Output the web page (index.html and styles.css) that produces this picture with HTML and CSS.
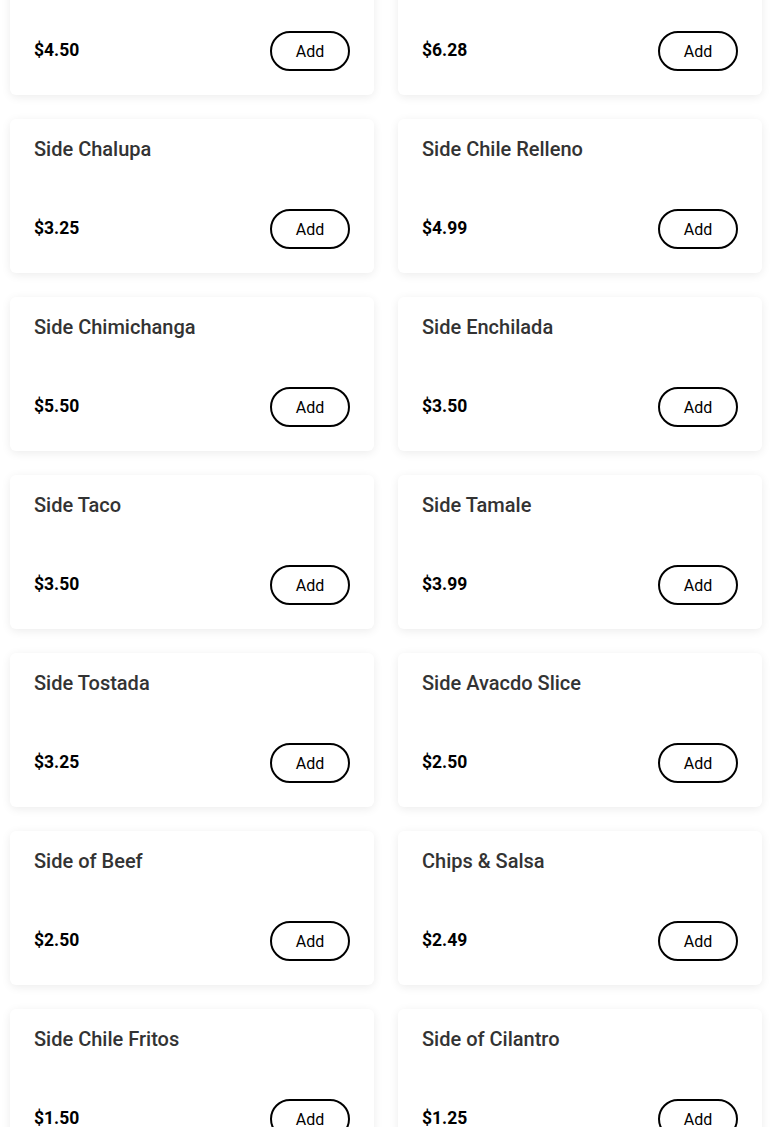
FILE: index.html
```html
<!DOCTYPE html>
<html lang="en">
<head>
<meta charset="utf-8">
<title>Menu</title>
<link rel="stylesheet" href="styles.css">
</head>
<body>
<main class="menu">
  <div class="card"><h3 class="title">Side Burrito</h3><div class="row"><span class="price">$4.50</span><button class="add">Add</button></div></div>
  <div class="card"><h3 class="title">Side Quesadilla</h3><div class="row"><span class="price">$6.28</span><button class="add">Add</button></div></div>
  <div class="card"><h3 class="title">Side Chalupa</h3><div class="row"><span class="price">$3.25</span><button class="add">Add</button></div></div>
  <div class="card"><h3 class="title">Side Chile Relleno</h3><div class="row"><span class="price">$4.99</span><button class="add">Add</button></div></div>
  <div class="card"><h3 class="title">Side Chimichanga</h3><div class="row"><span class="price">$5.50</span><button class="add">Add</button></div></div>
  <div class="card"><h3 class="title">Side Enchilada</h3><div class="row"><span class="price">$3.50</span><button class="add">Add</button></div></div>
  <div class="card"><h3 class="title">Side Taco</h3><div class="row"><span class="price">$3.50</span><button class="add">Add</button></div></div>
  <div class="card"><h3 class="title">Side Tamale</h3><div class="row"><span class="price">$3.99</span><button class="add">Add</button></div></div>
  <div class="card"><h3 class="title">Side Tostada</h3><div class="row"><span class="price">$3.25</span><button class="add">Add</button></div></div>
  <div class="card"><h3 class="title">Side Avacdo Slice</h3><div class="row"><span class="price">$2.50</span><button class="add">Add</button></div></div>
  <div class="card"><h3 class="title">Side of Beef</h3><div class="row"><span class="price">$2.50</span><button class="add">Add</button></div></div>
  <div class="card"><h3 class="title">Chips &amp; Salsa</h3><div class="row"><span class="price">$2.49</span><button class="add">Add</button></div></div>
  <div class="card"><h3 class="title">Side Chile Fritos</h3><div class="row"><span class="price">$1.50</span><button class="add">Add</button></div></div>
  <div class="card"><h3 class="title">Side of Cilantro</h3><div class="row"><span class="price">$1.25</span><button class="add">Add</button></div></div>
</main>
</body>
</html>
```
FILE: styles.css
```css
html, body {
  margin: 0;
  padding: 0;
  background: #ffffff;
  font-family: Roboto, "Liberation Sans", Arial, sans-serif;
}

.menu {
  display: grid;
  grid-template-columns: 364px 364px;
  column-gap: 24px;
  row-gap: 24px;
  padding: 0 10px 40px;
  margin-top: -59px;
}

.card {
  background: #ffffff;
  border-radius: 6px;
  box-shadow: 0 2px 10px rgba(0, 0, 0, 0.08);
  padding: 18px 24px 24px;
  display: flex;
  flex-direction: column;
}

.title {
  margin: 0 0 48px;
  font-size: 20px;
  line-height: 24px;
  font-weight: 500;
  color: #333333;
}

.row {
  display: flex;
  align-items: center;
  justify-content: space-between;
  height: 40px;
}

.price {
  font-size: 17.5px;
  font-weight: 700;
  color: #000000;
  line-height: 20px;
  margin-top: -2px;
}

.add {
  width: 80px;
  height: 40px;
  box-sizing: border-box;
  border: 2px solid #000000;
  border-radius: 20px;
  background: #ffffff;
  color: #000000;
  font-family: Roboto, "Liberation Sans", Arial, sans-serif;
  font-size: 16px;
  padding: 0;
  cursor: pointer;
}
```
